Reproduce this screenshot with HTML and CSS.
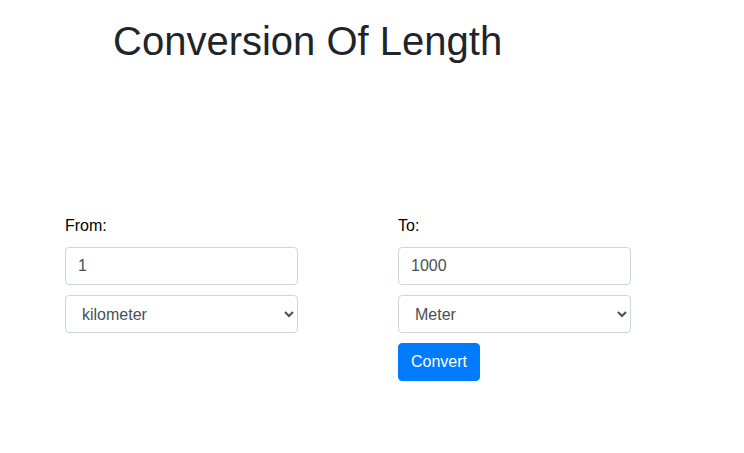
FILE: index.html
```html
<!DOCTYPE html>
<html>
<head>
<meta charset="utf-8">
<link rel="stylesheet" href="styles.css">
</head>
<body>
<div class="page">
  <h1 class="title">Conversion Of Length</h1>
  <div class="row">
    <div class="col">
      <label class="label">From:</label>
      <input class="control" type="text" value="1">
      <select class="control select">
        <option>kilometer</option>
      </select>
    </div>
    <div class="col">
      <label class="label">To:</label>
      <input class="control" type="text" value="1000">
      <select class="control select">
        <option>Meter</option>
      </select>
      <div><button class="btn">Convert</button></div>
    </div>
  </div>
</div>
</body>
</html>
```
FILE: styles.css
```css
* { box-sizing: border-box; }
html, body { margin: 0; padding: 0; background: #fff; }
body {
  font-family: "Liberation Sans", Arial, sans-serif;
  font-size: 16px;
  line-height: 1.5;
  color: #212529;
}
.page { padding: 17px 0 0 65px; }
.title {
  margin: 0 0 0 48px;
  font-size: 40px;
  font-weight: 500;
  line-height: 48px;
  color: #212529;
}
.row {
  display: flex;
  gap: 100px;
  margin-top: 149px;
}
.col {
  width: 233px;
  display: flex;
  flex-direction: column;
  gap: 10px;
}
.label {
  display: block;
  line-height: 24px;
  margin-bottom: -1px;
  color: #000;
}
.control {
  display: block;
  width: 233px;
  height: 38px;
  padding: 6px 12px;
  font-family: "Liberation Sans", Arial, sans-serif;
  font-size: 16px;
  line-height: 24px;
  color: #495057;
  background: #fff;
  border: 1px solid #ced4da;
  border-radius: 4px;
  margin: 0;
  outline: none;
}
.select { padding: 6px 8px 6px 12px; }
.btn {
  display: inline-block;
  height: 38px;
  padding: 6px 12px;
  font-family: "Liberation Sans", Arial, sans-serif;
  font-size: 16px;
  line-height: 24px;
  color: #fff;
  background: #007bff;
  border: 1px solid #007bff;
  border-radius: 4px;
}
```
